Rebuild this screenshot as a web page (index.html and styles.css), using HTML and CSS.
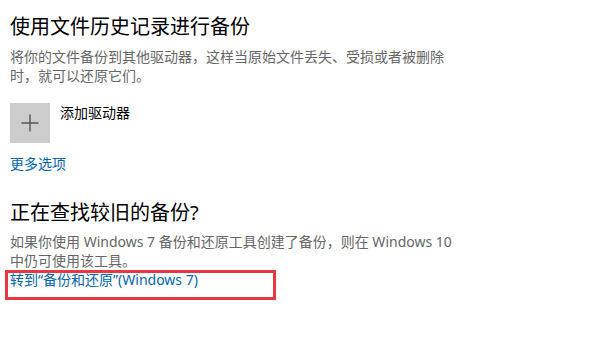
FILE: index.html
```html
<!DOCTYPE html>
<html lang="zh-CN">
<head>
<meta charset="utf-8">
<link rel="stylesheet" href="styles.css">
</head>
<body>
<main class="page">
  <h2 class="title t1">使用文件历史记录进行备份</h2>
  <p class="desc d1">将你的文件备份到其他驱动器，这样当原始文件丢失、受损或者被删除时，就可以还原它们。</p>
  <div class="add-row">
    <div class="tile">
      <svg width="40" height="40" viewBox="0 0 40 40"><path d="M20 11.5v17M11.5 20h17" stroke="#555" stroke-width="1.4" fill="none"/></svg>
    </div>
    <span class="add-label">添加驱动器</span>
  </div>
  <a class="link more">更多选项</a>
  <h2 class="title t2">正在查找较旧的备份?</h2>
  <p class="desc d2">如果你使用 Windows 7 备份和还原工具创建了备份，则在 Windows 10 中仍可使用该工具。</p>
  <div class="link-wrap">
    <a class="link">转到“备份和还原”(Windows 7)</a>
    <span class="highlight"></span>
  </div>
</main>
</body>
</html>
```
FILE: styles.css
```css
html, body { margin: 0; padding: 0; background: #fff; }
body {
  font-family: "Noto Sans", "Noto Sans CJK SC", sans-serif;
  width: 596px;
  height: 344px;
  overflow: hidden;
}
.page { padding-left: 10px; }
.title {
  margin: 0;
  font-weight: 400;
  font-size: 20px;
  line-height: 28px;
  color: #000;
}
.t1 { padding-top: 13px; }
.t2 { margin-top: 25px; }
.desc {
  margin: 0;
  font-size: 14px;
  line-height: 19px;
  color: #666;
}
.d1 { margin-top: 6px; width: 440px; }
.d2 { margin-top: 5px; width: 454px; }
.add-row {
  display: flex;
  align-items: flex-start;
  gap: 10px;
  margin-top: 18px;
}
.tile {
  width: 40px;
  height: 40px;
  background: #ccc;
  display: flex;
}
.add-label {
  font-size: 14px;
  line-height: 20px;
  color: #000;
}
.link {
  display: block;
  font-size: 14px;
  line-height: 20px;
  color: #0066b4;
  text-decoration: none;
}
.more { margin-top: 11px; }
.link-wrap { position: relative; }
.highlight {
  position: absolute;
  left: -5px;
  top: 0;
  width: 265px;
  height: 24px;
  border: 3px solid #e5393f;
}
```
